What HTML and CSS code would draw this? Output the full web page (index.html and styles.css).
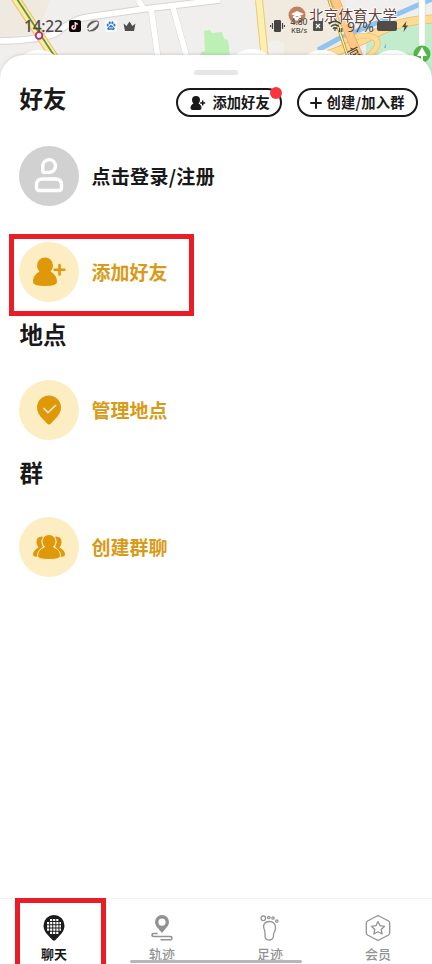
FILE: index.html
```html
<!DOCTYPE html>
<html lang="zh-CN">
<head>
<meta charset="utf-8">
<title>好友</title>
<link rel="stylesheet" href="styles.css">
</head>
<body>
<div class="phone">
  <svg class="map" viewBox="0 0 432 90" aria-hidden="true">
    <rect width="432" height="90" fill="#f0efed"/>
    <path d="M0 0H50L38 32 0 38Z" fill="#efeadf"/>
    <path d="M261 0H345L354 90H268Z" fill="#f1ebdf"/>
    <path d="M268 42Q280 38 284 44V58H268Z" fill="#f2f0ec"/>
    <path d="M366 40Q396 24 432 22V90H366Z" fill="#c2eccb"/>
    <path d="M204 31l6-1 2 3 10-1 2 7 4 1 2 16h-30l1-4 4-1Z" fill="#bdf0b4"/>
    <g fill="none" stroke-linejoin="round">
      <path d="M0 41Q45 40 58 32 72 19 88 17L144 9 220 0" stroke="#d6d4d1" stroke-width="7.4"/>
      <path d="M138 0l6 9M151 8l7 50M172 4l15 54" stroke="#d6d4d1" stroke-width="6.4"/>
      <path d="M0 41Q45 40 58 32 72 19 88 17L144 9 220 0M138 0l6 9M151 8l7 50M172 4l15 54" stroke="#fff" stroke-width="5.6"/>
      <path d="M259 0l6 60" stroke="#eacb75" stroke-width="8"/>
      <path d="M259 0l6 60" stroke="#ffefb2" stroke-width="6"/>
      <path d="M14-4L56 60" stroke="#e9bd65" stroke-width="9"/>
      <path d="M14-4L56 60" stroke="#ffe9a3" stroke-width="7"/>
      <path d="M15-4L57 60" stroke="#5b963c" stroke-width="1.8"/>
      <path d="M318 50L340 38 386 19 432-1" stroke="#91c4f1" stroke-width="5"/>
      <path d="M325 56Q355 45 382 30 408 19 438 19" stroke="#eeb96a" stroke-width="9"/>
      <path d="M325 56Q355 45 382 30 408 19 438 19" stroke="#ffdc96" stroke-width="7.5"/>
      <path d="M422-2V58" stroke="#d8dfd4" stroke-width="7"/>
      <path d="M422-2V58" stroke="#fff" stroke-width="5.5"/>
      <path d="M342 41Q368 32 376 39 382 46 364 60" stroke="#eeb96a" stroke-width="6"/>
      <path d="M342 41Q368 32 376 39 382 46 364 60" stroke="#ffdc96" stroke-width="4.8"/>
      <path d="M334-3L361 62" stroke="#eaa75b" stroke-width="9"/>
      <path d="M334-3L361 62" stroke="#ffc887" stroke-width="7.5"/>
      <path d="M328-3L349 60" stroke="#b69a30" stroke-width="3"/>
      <path d="M328-3L349 60" stroke="#fff5c5" stroke-width="1.2"/>
    </g>
    <path d="M384 48l2-5v5Z" fill="#7bb4ee"/>
    <circle cx="39" cy="35.500" r="3.300" fill="#fff" stroke="#b92c78" stroke-width="1.800"/>
    <circle cx="297" cy="15" r="8.500" fill="#c1805f"/>
    <path d="M291 14l6-3 7 3-7 3Zm2 2v3q4 3 8 0v-3" fill="#fff"/>
    <text x="309" y="21" class="map-name">北京体育大学</text>
    <text x="347" y="58" class="map-street" transform="rotate(-28 354 52)">京</text>
    <path d="M58 0l2-2M106 0l2-2" stroke="#665"/>
    <g fill="#fff">
      <ellipse cx="39" cy="65" rx="21" ry="15"/>
      <ellipse cx="252" cy="65" rx="21" ry="16"/>
      <ellipse cx="322" cy="65" rx="21" ry="15"/>
      <ellipse cx="393" cy="65" rx="21" ry="15"/>
    </g>
    <circle cx="422" cy="54" r="8.500" fill="#55b747"/>
    <path d="M422 47l5 9h-4v5h-2v-5h-4Z" fill="#fff"/>
  </svg>

  <header class="status">
    <div class="status-left">
      <span class="clock">14:22</span>
      <svg width="12" height="12" viewBox="0 0 12 12"><rect width="12" height="12" rx="2" fill="#080808"/><path d="M6.500 2v5.500a1.700 1.700 0 1 1-1.700-1.600M6.500 2q.3 2 2.500 2.200" fill="none" stroke="#f34b67" stroke-width="1.500"/><path d="M6.200 2v5.200a1.600 1.600 0 1 1-1.600-1.600M6.200 2q.3 2 2.400 2" fill="none" stroke="#fff" stroke-width="1.100"/></svg>
      <svg width="12" height="12" viewBox="0 0 12 12"><path d="M.6 8C0 4 4.500.2 9.500 1 5.500 2.500 2.500 4.800.6 8ZM11.400 3.500C12 8 7.500 11.800 2.500 11 6.500 9.500 9.500 7 11.400 3.500Z" fill="#5a5856" stroke="#5a5856" stroke-width=".7"/><path d="M1.200 9.200Q.2 11 2.500 11M9.500 1Q12 .8 11.400 3.500" fill="none" stroke="#5a5856"/></svg>
      <svg width="12" height="12" viewBox="0 0 12 12"><rect width="12" height="12" rx="2.500" fill="#f8fbff"/><g fill="#397bc9"><ellipse cx="2.700" cy="5" rx="1.100" ry="1.500"/><ellipse cx="4.700" cy="2.700" rx="1.100" ry="1.500"/><ellipse cx="7.400" cy="2.700" rx="1.100" ry="1.500"/><ellipse cx="9.400" cy="5" rx="1.100" ry="1.500"/><path d="M6 5C4.500 5 4.500 6.500 3 7.500s-.5 3 1 2.500 2.500 0 4 0 2.500-1.500 1-2.500S7.500 5 6 5Z"/></g><path d="M5 7v1.500M7 7v1.500" stroke="#fff"/></svg>
      <svg width="13" height="12" viewBox="0 0 13 12"><path d="M.5 3.500 3.500 6l3-4.500L9.500 6l3-2.500L11 11H2Z" fill="#504e4b"/></svg>
    </div>
    <div class="status-right">
      <svg width="15" height="14" viewBox="0 0 15 14"><rect x="4" y="1" width="7" height="12" rx="1.200" fill="#464443"/><path d="M2.500 4v6M.6 6v2M12.500 4v6M14.400 6v2" stroke="#464443" stroke-width="1.200"/></svg>
      <span class="speed"><b>4.80</b><b>KB/s</b></span>
      <svg class="sim" width="10" height="12" viewBox="0 0 10 12"><path d="M1 1h8q1 0 1 1v8q0 1-1 1H1q-1 0-1-1V2q0-1 1-1Z" fill="#4f504c"/><path d="m3 4 4 4m0-4L3 8" stroke="#fff" stroke-width="1.200"/></svg>
      <svg class="wifi" width="15" height="12" viewBox="0 0 15 12" fill="none" stroke="#47463f" stroke-width="1.500"><path d="M.8 4Q7 -1.500 13.200 4M3 6.500Q7 3 11 6.500M5 8.800Q7 7 9 8.800"/><path d="M7 9v2M11.500 8v4M13.800 8v4" stroke-width="1.200"/></svg>
      <span class="percent">97%</span>
      <span class="battery"></span>
      <svg class="bolt" width="6" height="11" viewBox="0 0 6 11"><path d="M4.500 0 0 6h2.500L1.500 11 6 4.500H3.500Z" fill="#4b4936"/></svg>
    </div>
  </header>

  <main class="sheet">
    <div class="handle"></div>
    <div class="toolbar">
      <h1 class="heading">好友</h1>
      <div class="actions">
        <button class="pill pill-friend">
          <svg width="16" height="14" viewBox="0 0 16 14"><path d="M6 0a4 4 0 0 1 4 4q0 2-1.500 3.500Q11.500 9 11.500 12q0 2-2 2h-7q-2 0-2-2 0-3 3-4.500Q2 6 2 4a4 4 0 0 1 4-4Z" fill="#191919"/><path d="M12.700 4.500v5M10.200 7h5" stroke="#191919" stroke-width="1.500"/></svg>
          <span>添加好友</span><i class="dot"></i>
        </button>
        <button class="pill pill-group">
          <svg width="12" height="12" viewBox="0 0 12 12"><path d="M6 .3v11.400M.3 6h11.400" stroke="#191919" stroke-width="2"/></svg>
          <span>创建/加入群</span>
        </button>
      </div>
    </div>

    <div class="row login">
      <span class="avatar avatar-gray"><svg width="60" height="60" viewBox="0 0 60 60" fill="none" stroke="#fff" stroke-width="3.400"><path d="M23.700 20.200a6.400 6.400 0 1 1 6.400 6.200h-4.400q-2 0-2-2ZM23.500 33h13q6 0 6 6v2.500q0 3-3 3h-19q-3 0-3-3V39q0-6 6-6Z"/></svg></span>
      <span class="label">点击登录/注册</span>
    </div>

    <div class="row add">
      <span class="avatar"><svg width="60" height="60" viewBox="0 0 60 60" fill="#df9808"><path d="M26 15.500a8 8 0 0 1 8 8q0 3.500-2.500 6Q38 33 38 40q0 4-12 4t-12-4q0-7 6.500-10.500-2.500-2.500-2.500-6a8 8 0 0 1 8-8Z"/><path d="M40.500 23v9.500M35.700 27.700h9.600" stroke="#df9808" stroke-width="2.600" stroke-linecap="round"/></svg></span>
      <span class="label">添加好友</span>
      <div class="marker marker-add"></div>
    </div>

    <h2 class="heading">地点</h2>
    <div class="row place">
      <span class="avatar"><svg width="60" height="60" viewBox="0 0 60 60"><path d="M30 15.500A12 12 0 0 1 42 27.500C42 34.500 36 39 32 43.500q-2 2-4 0C24 39 18 34.500 18 27.500A12 12 0 0 1 30 15.500Z" fill="#df9808"/><path d="m24.500 28 4.500 4.500 8-7.500" fill="none" stroke="#fdedc2" stroke-width="1.700"/></svg></span>
      <span class="label">管理地点</span>
    </div>

    <h2 class="heading">群</h2>
    <div class="row group">
      <span class="avatar"><svg width="60" height="60" viewBox="0 0 60 60" fill="#df9808"><path id="side" d="M23 19.500q-6 0-5.500 6 .2 3 2 5Q14 33 14 38q0 1.500 5 2 .5-7 5-10-3-5.500 0-10Z"/><use href="#side" transform="matrix(-1 0 0 1 60 0)"/><path d="M30 17.500a7 7 0 0 1 7 7q0 3-2.500 5.500 7 2.500 7 9 0 3.500-11.500 3.500t-11.500-3.500q0-6.500 7-9-2.500-2.500-2.500-5.500A7 7 0 0 1 30 17.500Z" stroke="#fdedc2" stroke-width="1"/></svg></span>
      <span class="label">创建群聊</span>
    </div>
  </main>

  <nav class="tabs">
    <a class="tab active">
      <svg width="28" height="28" viewBox="0 0 28 28"><path d="M14 1A10.500 10.500 0 0 1 24.500 11.500C24.500 18 19 22 15.500 26q-1.500 1.500-3 0C9 22 3.500 18 3.500 11.500A10.500 10.500 0 0 1 14 1Z" fill="#1b1b1b"/><path d="M10 6h8.500M7 9.200h14M7 12.400h14M7 15.600h14M10 18.800h8.500" stroke="#fff" stroke-width="2.200" stroke-dasharray="2.200 .9"/></svg>
      <span>聊天</span>
      <div class="marker marker-tab"></div>
    </a>
    <a class="tab">
      <svg width="28" height="28" viewBox="0 0 28 28"><path fill-rule="evenodd" d="M14 1a7 7 0 0 1 7 7c0 4-4 7-7 11-3-4-7-7-7-11a7 7 0 0 1 7-7Zm0 3.600a3.600 3.600 0 1 0 0 7.200 3.600 3.600 0 0 0 0-7.200Z" fill="#929292"/><path d="M9 19.500H6q-2 0-2 1.500t2 1.500h16q2 0 2 1.700t-2 1.600h-9" fill="none" stroke="#929292" stroke-width="1.500" stroke-linecap="round"/></svg>
      <span>轨迹</span>
    </a>
    <a class="tab">
      <svg width="28" height="28" viewBox="0 0 28 28" fill="none" stroke="#969696" stroke-width="1.300"><circle cx="7.300" cy="4.300" r="2.300"/><circle cx="12.800" cy="3.500" r="1.200"/><circle cx="17" cy="4" r="1.200"/><circle cx="20.800" cy="7" r="1.200"/><path d="M13.500 7.500C9 7.500 6.500 10.500 8 14.500c1.500 3 1 5 1 7.500 0 3 2 4 4.500 4 3 0 4-2 4-5 0-2.500 2-4 2-7 0-4-2-6.500-6-6.500Z"/></svg>
      <span>足迹</span>
    </a>
    <a class="tab">
      <svg width="28" height="28" viewBox="0 0 28 28" fill="none" stroke="#929292" stroke-width="1.300" stroke-linejoin="round"><path d="M12.500 2.200q1.500-.9 3 0l9 4.800q1.200.7 1.200 2v10q0 1.300-1.200 2l-9 4.800q-1.500.9-3 0l-9-4.800q-1.200-.7-1.200-2V9q0-1.300 1.200-2Z"/><path d="m14 7.500 2 4.200 4.600.6-3.400 3.200.9 4.500-4.100-2.200L9.900 20l.9-4.500-3.400-3.200 4.600-.6Z"/></svg>
      <span>会员</span>
    </a>
    <div class="home-bar"></div>
  </nav>
</div>
</body>
</html>
```

FILE: styles.css
```css
* { box-sizing: border-box; }

body {
  margin: 0;
  font-family: "Noto Sans CJK SC", sans-serif;
  color: #191919;
  background: #fff;
}

.phone {
  position: relative;
  display: flex;
  flex-direction: column;
  height: 964px;
  overflow: hidden;
}

svg { display: block; flex: none; }

.map {
  position: absolute;
  top: 0;
  left: 0;
  width: 432px;
  height: 90px;
}

.map-name { font-size: 14.7px; fill: #633f38; stroke: #fff; stroke-width: 1.500px; paint-order: stroke; }
.map-street { font-size: 13px; fill: #4b4035; }

.status {
  position: relative;
  flex: none;
  display: flex;
  justify-content: space-between;
  height: 55px;
  padding: 14px 24px 17px;
  font-family: "Noto Sans", sans-serif;
  color: #4c4946;
}

.status-left, .status-right { display: flex; align-items: center; }
.status-left { gap: 6px; }
.clock { width: 39px; font-size: 15.5px; font-weight: 500; letter-spacing: -.2px; white-space: nowrap; }
.speed {
  display: flex;
  flex-direction: column;
  width: 20px;
  margin: 0 4px;
  font-size: 7.5px;
  line-height: 8px;
  text-align: center;
}
.speed b { font-weight: 500; }
.speed b:first-child { font-size: 8.5px; }
.wifi { margin-left: 5px; }
.percent { width: 27px; margin-left: 4px; font-size: 14px; letter-spacing: -.4px; white-space: nowrap; }
.battery { width: 20px; height: 10px; margin-left: 3px; border-radius: 2px; background: #504b46; }
.bolt { margin-left: 5px; }

.sheet {
  position: relative;
  flex: 1;
  display: flex;
  flex-direction: column;
  padding: 15px 14px 0 19px;
  border-radius: 24px 24px 0 0;
  background: #fff;
  box-shadow: 0 -1px 3px rgba(0, 0, 0, .12);
}

.handle {
  flex: none;
  width: 44px;
  height: 5px;
  margin-left: 175px;
  border-radius: 3px;
  background: #e6e6e6;
}

.toolbar { display: flex; justify-content: space-between; height: 54px; padding-top: 6px; }
.heading { margin: 0; height: 34px; padding-left: .5px; font-size: 23.5px; line-height: 34px; font-weight: 700; }
.actions { display: flex; gap: 15px; }

.pill {
  position: relative;
  display: flex;
  align-items: center;
  height: 29px;
  margin-top: 7px;
  padding: 0;
  border: 2px solid #191919;
  border-radius: 15px;
  background: #fff;
  font: 700 14.3px/25px "Noto Sans CJK SC", sans-serif;
  color: #191919;
  white-space: nowrap;
}

.pill span { position: relative; top: -1px; }
.pill-friend { width: 106px; padding-left: 11.5px; gap: 7px; }
.pill-group { width: 121px; padding-left: 10.5px; gap: 5px; letter-spacing: .2px; }
.dot {
  position: absolute;
  top: -3px;
  right: -2px;
  width: 12px;
  height: 12px;
  border-radius: 50%;
  background: #fc343b;
}

.row { position: relative; display: flex; align-items: center; gap: 12.5px; height: 60px; }
.row.login { margin: 17px 0 0; }
.row.add { margin: 36px 0 15px; }
.row.place { margin: 29px 0 15px; }
.row.group { margin: 28px 0 0; }
.avatar { width: 60px; height: 60px; border-radius: 50%; background: #fdedc2; }
.avatar-gray { background: #d1d1d1; }
.label { font-size: 19px; line-height: 28px; font-weight: 700; color: #d99a17; }
.login .label { color: #191919; letter-spacing: .3px; }

.marker { position: absolute; border: 5px solid #ea1c26; }
.marker-add { left: -10px; top: -8px; width: 185px; height: 82px; }
.marker-tab { left: 15px; top: -1px; width: 91px; height: 75px; }

.tabs {
  position: relative;
  flex: none;
  display: grid;
  grid-template-columns: repeat(4, 1fr);
  height: 66px;
  border-top: 1px solid #f3f3f3;
  background: #fff;
}

.tab {
  position: relative;
  display: flex;
  flex-direction: column;
  align-items: center;
  padding-top: 15px;
  font-size: 13px;
  line-height: 20px;
  font-weight: 500;
  color: #929292;
}

.tab span { margin-top: 2px; }
.tab.active { color: #191919; font-weight: 700; }
.home-bar {
  position: absolute;
  left: 130px;
  bottom: 1px;
  width: 172px;
  height: 3px;
  border-radius: 2px;
  background: #b7b7b7;
}
```
